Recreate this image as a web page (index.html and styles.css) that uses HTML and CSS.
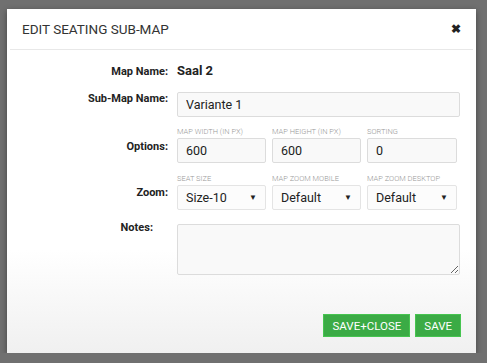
FILE: index.html
```html
<!DOCTYPE html>
<html lang="en">
<head>
    <meta charset="UTF-8">
    <title>Edit Seating Sub-Map</title>
    <link rel="stylesheet" href="styles.css">
</head>
<body>
    <div class="modal">
        <div class="modal-header">
            <h2>EDIT SEATING SUB-MAP</h2>
            <span class="close">&#10006;</span>
        </div>

        <div class="modal-body">
            <div class="label">Map Name:</div>
            <div class="map-name">Saal 2</div>

            <div class="label">Sub-Map Name:</div>
            <input class="field" type="text" value="Variante 1">

            <div class="label with-hint">Options:</div>
            <div class="triple options">
                <div class="cell">
                    <span class="hint">Map width (in px)</span>
                    <input class="field" type="text" value="600">
                </div>
                <div class="cell">
                    <span class="hint">Map height (in px)</span>
                    <input class="field" type="text" value="600">
                </div>
                <div class="cell">
                    <span class="hint">Sorting</span>
                    <input class="field" type="text" value="0">
                </div>
            </div>

            <div class="label with-hint">Zoom:</div>
            <div class="triple zoom">
                <div class="cell">
                    <span class="hint">Seat size</span>
                    <div class="select">Size-10<span class="caret">&#9660;</span></div>
                </div>
                <div class="cell">
                    <span class="hint">Map zoom mobile</span>
                    <div class="select">Default<span class="caret">&#9660;</span></div>
                </div>
                <div class="cell">
                    <span class="hint">Map zoom desktop</span>
                    <div class="select">Default<span class="caret">&#9660;</span></div>
                </div>
            </div>

            <div class="label notes-label">Notes:</div>
            <textarea class="field notes"></textarea>
        </div>

        <div class="modal-footer">
            <button class="btn">SAVE+CLOSE</button>
            <button class="btn">SAVE</button>
        </div>
    </div>
</body>
</html>
```

FILE: styles.css
```css
body {
    margin: 0;
    background-color: #707070;
    font-family: Roboto, 'Liberation Sans', Arial, sans-serif;
    color: #333;
}

.modal {
    margin: 9px 0 0 7px;
    width: 469px;
    height: 344px;
    background: linear-gradient(#ffffff 70%, #f0f0f0);
    box-shadow: 0 2px 6px rgba(0, 0, 0, 0.4);
    display: flex;
    flex-direction: column;
}

.modal-header {
    display: flex;
    justify-content: space-between;
    align-items: center;
    height: 40px;
    margin: 0 3px;
    padding: 0 12px;
    border-bottom: 1px solid #e8e8e8;
}

.modal-header h2 {
    margin: 0;
    font-size: 13.5px;
    font-weight: normal;
    color: #333;
}

.close {
    font-size: 12px;
    font-weight: bold;
    color: #222;
}

.modal-body {
    display: grid;
    grid-template-columns: 161px 283px;
    column-gap: 9px;
    align-items: center;
    padding-top: 12px;
}

.label {
    text-align: right;
    font-size: 11px;
    font-weight: bold;
    color: #222;
}

.map-name {
    font-size: 13px;
    font-weight: bold;
    color: #222;
    height: 18px;
    line-height: 18px;
}

.field {
    box-sizing: border-box;
    height: 25px;
    margin: 0;
    padding: 0 8px;
    border: 1px solid #dcdcdc;
    border-radius: 2px;
    background-color: #f9f9f9;
    font-family: inherit;
    font-size: 12.5px;
    color: #222;
    width: 100%;
}

.modal-body > .field {
    margin-top: 12px;
}

.with-hint {
    padding-top: 12px;
}

.triple {
    display: grid;
    grid-template-columns: 89px 89px 90px;
    column-gap: 6px;
}

.options {
    margin-top: 10px;
}

.zoom {
    margin-top: 11px;
}

.cell {
    display: flex;
    flex-direction: column;
}

.hint {
    font-size: 7.5px;
    font-weight: 300;
    text-transform: uppercase;
    color: #999;
    height: 11px;
    line-height: 9px;
    white-space: nowrap;
}

.select {
    box-sizing: border-box;
    height: 25px;
    padding: 0 8px;
    border: 1px solid #e4e4e4;
    border-radius: 2px;
    background-color: #fcfcfc;
    font-size: 12.5px;
    color: #222;
    display: flex;
    justify-content: space-between;
    align-items: center;
}

.caret {
    font-size: 8px;
}

.notes-label {
    align-self: start;
    margin-top: 11px;
    padding-right: 15px;
}

.modal-body > .notes {
    margin-top: 14px;
    height: 51px;
    resize: vertical;
}

.modal-footer {
    margin-top: auto;
    display: flex;
    justify-content: flex-end;
    gap: 5px;
    padding: 0 15px 16px 0;
}

.btn {
    background-color: #3bab45;
    color: #fff;
    border: 1px solid #46c450;
    height: 23px;
    padding: 0 8px;
    font-family: inherit;
    font-size: 11.5px;
}
```
